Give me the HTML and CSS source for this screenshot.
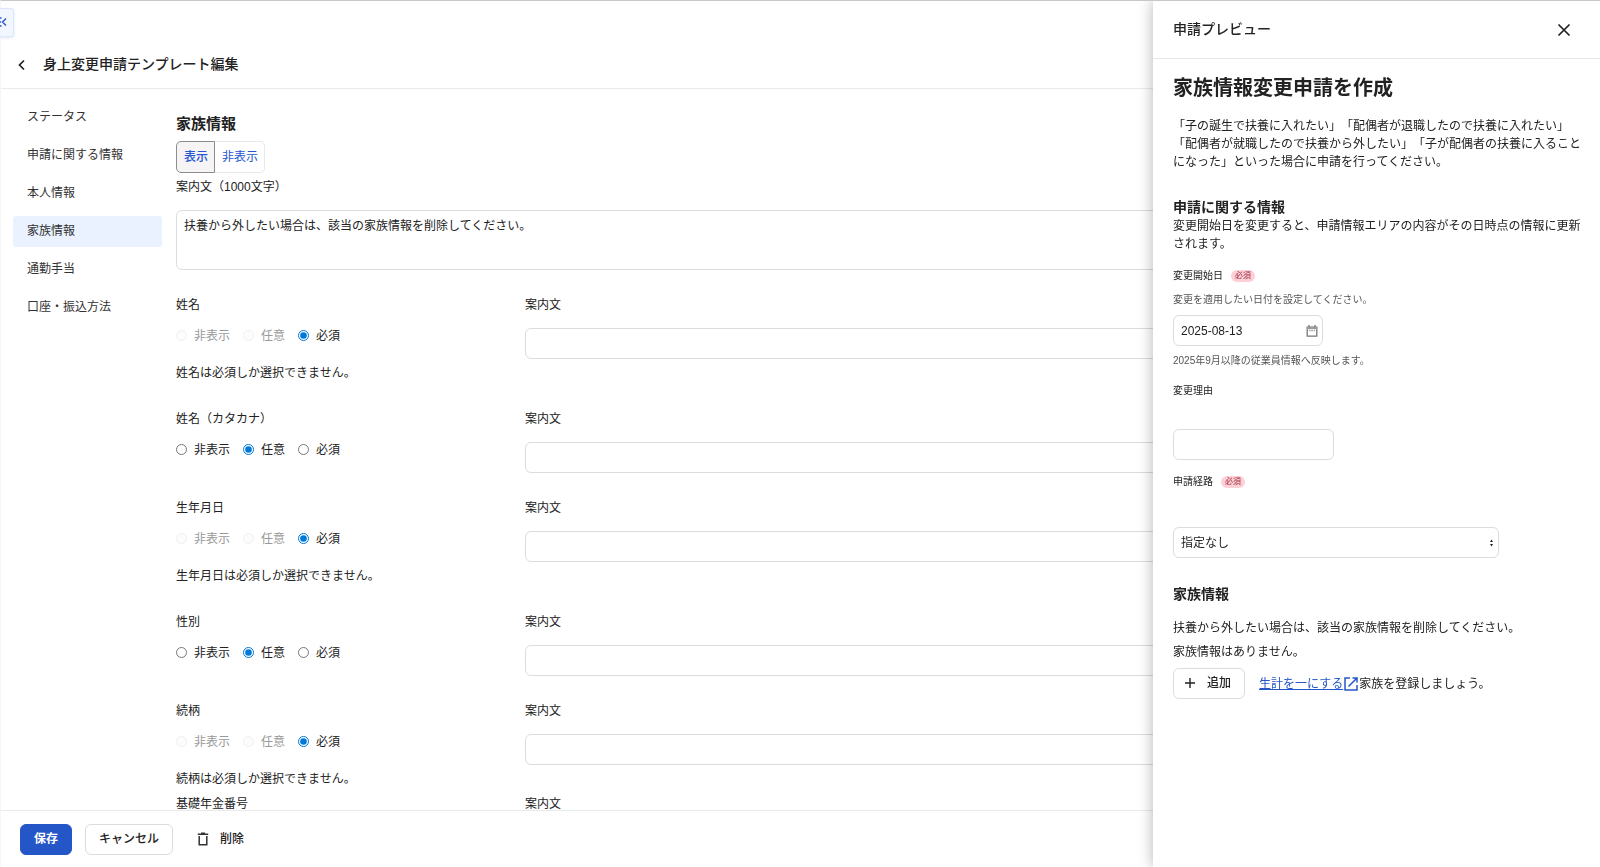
FILE: index.html
```
<!DOCTYPE html>
<html lang="ja">
<head>
<meta charset="utf-8">
<title>身上変更申請テンプレート編集</title>
<link rel="stylesheet" href="styles.css">
</head>
<body>
<div class="app">
  <header class="page-header">
    <button class="icon-button" type="button" aria-label="戻る">
      <svg width="12" height="12" viewBox="0 0 12 12"><path d="M8 1.500 3.500 6 8 10.500" fill="none" stroke="#222" stroke-width="1.700"/></svg>
    </button>
    <h1 class="page-title">身上変更申請テンプレート編集</h1>
  </header>

  <div class="page-body">
    <nav class="side-nav">
      <a class="side-link" href="#status">ステータス</a>
      <a class="side-link" href="#request">申請に関する情報</a>
      <a class="side-link" href="#person">本人情報</a>
      <a class="side-link is-active" href="#family">家族情報</a>
      <a class="side-link" href="#commute">通勤手当</a>
      <a class="side-link" href="#account">口座・振込方法</a>
    </nav>

    <main class="form">
      <h2 class="form-title">家族情報</h2>
      <div class="toggle">
        <button class="toggle-item is-on" type="button">表示</button>
        <button class="toggle-item" type="button">非表示</button>
      </div>
      <label class="guide-label" for="guide">案内文（1000文字）</label>
      <textarea class="field guide" id="guide">扶養から外したい場合は、該当の家族情報を削除してください。</textarea>

      <div class="row">
        <fieldset class="choice">
          <legend>姓名</legend>
          <div class="radios">
            <label class="radio"><input type="radio" name="name" disabled>非表示</label>
            <label class="radio"><input type="radio" name="name" disabled>任意</label>
            <label class="radio"><input type="radio" name="name" checked>必須</label>
          </div>
          <p class="note">姓名は必須しか選択できません。</p>
        </fieldset>
        <div class="guide-cell"><label for="g1">案内文</label><input class="field" id="g1" type="text"></div>
      </div>

      <div class="row">
        <fieldset class="choice">
          <legend>姓名（カタカナ）</legend>
          <div class="radios">
            <label class="radio"><input type="radio" name="kana">非表示</label>
            <label class="radio"><input type="radio" name="kana" checked>任意</label>
            <label class="radio"><input type="radio" name="kana">必須</label>
          </div>
        </fieldset>
        <div class="guide-cell"><label for="g2">案内文</label><input class="field" id="g2" type="text"></div>
      </div>

      <div class="row">
        <fieldset class="choice">
          <legend>生年月日</legend>
          <div class="radios">
            <label class="radio"><input type="radio" name="birth" disabled>非表示</label>
            <label class="radio"><input type="radio" name="birth" disabled>任意</label>
            <label class="radio"><input type="radio" name="birth" checked>必須</label>
          </div>
          <p class="note">生年月日は必須しか選択できません。</p>
        </fieldset>
        <div class="guide-cell"><label for="g3">案内文</label><input class="field" id="g3" type="text"></div>
      </div>

      <div class="row">
        <fieldset class="choice">
          <legend>性別</legend>
          <div class="radios">
            <label class="radio"><input type="radio" name="sex">非表示</label>
            <label class="radio"><input type="radio" name="sex" checked>任意</label>
            <label class="radio"><input type="radio" name="sex">必須</label>
          </div>
        </fieldset>
        <div class="guide-cell"><label for="g4">案内文</label><input class="field" id="g4" type="text"></div>
      </div>

      <div class="row row-tight">
        <fieldset class="choice">
          <legend>続柄</legend>
          <div class="radios">
            <label class="radio"><input type="radio" name="relation" disabled>非表示</label>
            <label class="radio"><input type="radio" name="relation" disabled>任意</label>
            <label class="radio"><input type="radio" name="relation" checked>必須</label>
          </div>
          <p class="note">続柄は必須しか選択できません。</p>
        </fieldset>
        <div class="guide-cell"><label for="g5">案内文</label><input class="field" id="g5" type="text"></div>
      </div>

      <div class="row">
        <fieldset class="choice"><legend>基礎年金番号</legend></fieldset>
        <div class="guide-cell"><label for="g6">案内文</label><input class="field" id="g6" type="text"></div>
      </div>
    </main>
  </div>

  <footer class="page-footer">
    <button class="button button-primary" type="button">保存</button>
    <button class="button" type="button">キャンセル</button>
    <button class="button button-plain" type="button">
      <svg width="12" height="14" viewBox="0 0 12 14"><path d="M2.200 4V12.700H9.800V4M.8 2.300H11.200M4 1.200H8" fill="none" stroke="#333" stroke-width="1.500"/></svg>
      削除
    </button>
  </footer>
</div>

<button class="drawer-tab" type="button" aria-label="メニューを開く">
  <svg width="7" height="12" viewBox="0 0 7 12"><path d="M0 2H1.500M0 6H1M0 10H1.500M6 2.500 2.500 6 6 9.500" fill="none" stroke="#2456d0" stroke-width="1.400"/></svg>
</button>

<aside class="preview">
  <header class="preview-header">
    <h2 class="preview-title">申請プレビュー</h2>
    <button class="icon-button" type="button" aria-label="閉じる">
      <svg width="14" height="14" viewBox="0 0 14 14"><path d="M1.500 1.500 12.500 12.500M12.500 1.500 1.500 12.500" fill="none" stroke="#222" stroke-width="1.700"/></svg>
    </button>
  </header>
  <div class="preview-body">
    <h3 class="preview-heading">家族情報変更申請を作成</h3>
    <p class="lead">「子の誕生で扶養に入れたい」「配偶者が退職したので扶養に入れたい」「配偶者が就職したので扶養から外したい」「子が配偶者の扶養に入ることになった」といった場合に申請を行ってください。</p>

    <h4 class="section-title">申請に関する情報</h4>
    <p class="section-text">変更開始日を変更すると、申請情報エリアの内容がその日時点の情報に更新されます。</p>

    <div class="small-label"><label for="start">変更開始日</label><span class="badge">必須</span></div>
    <p class="hint">変更を適用したい日付を設定してください。</p>
    <div class="date-box">
      <input class="field" id="start" type="text" value="2025-08-13">
      <svg class="date-icon" width="12" height="12" viewBox="0 0 12 12"><path d="M1.200 2.200H10.800V11.200H1.200ZM3 0V2M9 0V2" fill="none" stroke="#777" stroke-width="1.300"/><path d="M1 2H11V4.200H1Z" fill="#999"/><path d="M3 5.700H9" stroke="#888" stroke-width="1" stroke-dasharray="1.500 .8"/></svg>
    </div>
    <p class="hint hint-after">2025年9月以降の従業員情報へ反映します。</p>

    <div class="small-label"><label for="reason">変更理由</label></div>
    <input class="field reason" id="reason" type="text">

    <div class="small-label"><label for="route">申請経路</label><span class="badge">必須</span></div>
    <div class="select-box">
      <select class="field" id="route"><option>指定なし</option></select>
      <svg class="select-icon" width="5" height="8" viewBox="0 0 5 8"><path d="M1 3 2.500 .5 4 3ZM1 5 2.500 7.500 4 5Z" fill="#222"/></svg>
    </div>

    <h4 class="section-title">家族情報</h4>
    <p class="family-text">扶養から外したい場合は、該当の家族情報を削除してください。</p>
    <p class="family-empty">家族情報はありません。</p>
    <div class="add-row">
      <button class="button button-add" type="button">
        <svg width="12" height="12" viewBox="0 0 12 12"><path d="M6 1V11M1 6H11" stroke="#222" stroke-width="1.400"/></svg>
        追加
      </button>
      <p class="add-text"><a class="link" href="#help">生計を一にする</a><svg width="14" height="14" viewBox="0 0 14 14"><path d="M6 1H1V13H13V8M8.500 1H13V5.500M13 1 4.500 9.500" fill="none" stroke="#2456c8" stroke-width="1.500"/></svg>家族を登録しましょう。</p>
    </div>
  </div>
</aside>
</body>
</html>
```
FILE: styles.css
```
* {
  box-sizing: border-box;
}

body {
  margin: 0;
  overflow: hidden;
  background: #fff;
  color: #222;
  font: 12px/18px "Liberation Sans", "Noto Sans CJK JP", sans-serif;
  text-spacing-trim: space-all;
}

h1, h2, h3, h4, p {
  margin: 0;
}

button, input, select, textarea {
  font: inherit;
  color: inherit;
}

.app {
  display: flex;
  flex-direction: column;
  height: 100vh;
  border-top: 1px solid #c8c8c8;
  border-left: 1px solid #f6f6f6;
}

.icon-button {
  display: flex;
  padding: 1px 0 0;
  border: 0;
  background: none;
}

.page-header {
  display: flex;
  flex: none;
  align-items: center;
  gap: 15px;
  padding: 52px 15px 13px;
  border-bottom: 1px solid #e6ecec;
}

.page-title,
.preview-title {
  font-size: 14px;
  line-height: 22px;
  font-weight: 500;
}

.page-body {
  display: flex;
  flex: 1;
  gap: 14px;
  min-height: 0;
  overflow: hidden;
}

.side-nav {
  display: flex;
  flex: none;
  flex-direction: column;
  gap: 7px;
  width: 149px;
  margin: 13px 0 0 12px;
}

.side-link {
  padding: 6px 14px 7px;
  border-radius: 3px;
  color: #333;
  text-decoration: none;
}

.side-link.is-active {
  background: #eaf2ff;
}

.form {
  flex: 1;
  min-width: 0;
  padding: 23px 20px 0 0;
}

.form-title {
  font-size: 15px;
  line-height: 24px;
  font-weight: 700;
}

.toggle {
  display: flex;
  margin: 5px 0;
}

.toggle-item {
  padding: 6px 6px 6px 7px;
  border: 1px solid #e8e8e8;
  border-left: 0;
  border-radius: 0 5px 5px 0;
  background: #fff;
  color: #2456d0;
  line-height: 18px;
}

.toggle-item.is-on {
  border: 1px solid #8c8c8c;
  border-radius: 5px 0 0 5px;
  background: #f6f4f5;
  font-weight: 500;
}

.guide-label {
  display: block;
  margin-bottom: 14px;
}

.field {
  display: block;
  width: 100%;
  height: 31px;
  padding: 5px 7px;
  border: 1px solid #dcdcdc;
  border-radius: 6px;
  background: #fff;
}

.guide {
  height: 60px;
  margin-bottom: 26px;
  padding-top: 6px;
  resize: none;
}

.row {
  display: flex;
  margin-bottom: 26px;
}

.row-tight {
  margin-bottom: 5px;
}

.choice {
  flex: none;
  width: 349px;
  min-width: 0;
  margin: 0;
  padding: 0;
  border: 0;
}

.choice legend {
  padding: 0;
}

.radios {
  display: flex;
  gap: 13px;
  margin-top: 13px;
}

.radio {
  display: flex;
  align-items: center;
  gap: 7px;
}

.radio input {
  width: 11px;
  height: 11px;
  margin: 0 0 2px;
  accent-color: #0078d7;
}

.radio:has(:disabled) {
  color: #999;
}

.radio input:disabled {
  opacity: 0.3;
}

.note {
  margin: 19px 0 2px;
}

.guide-cell {
  display: flex;
  flex: 1;
  flex-direction: column;
  gap: 14px;
}

.page-footer {
  display: flex;
  flex: none;
  gap: 13px;
  padding: 13px 19px 12px;
  border-top: 1px solid #e6ecec;
}

.button {
  display: flex;
  align-items: center;
  height: 31px;
  padding: 0 13px 2px;
  border: 1px solid #dcdcdc;
  border-radius: 6px;
  background: #fff;
  font-weight: 500;
}

.button-primary {
  border-color: #2456c8;
  background: #2456c8;
  color: #fff;
  font-weight: 700;
}

.button-plain {
  gap: 11px;
  padding: 0 10px 2px;
  border-color: transparent;
}

.drawer-tab {
  position: absolute;
  top: 8px;
  left: 0;
  width: 14px;
  height: 29px;
  padding: 3px 0 0;
  border: 1px solid #dbe7fd;
  border-left: 0;
  border-radius: 0 4px 4px 0;
  background: #f2f7ff;
  box-shadow: 0 1px 3px rgba(36, 86, 200, 0.15);
  text-align: left;
}

.preview {
  position: fixed;
  top: 1px;
  right: 0;
  bottom: 0;
  width: 447px;
  overflow: auto;
  background: #fff;
  box-shadow: 0 0 14px rgba(0, 0, 0, 0.3);
  clip-path: inset(0 0 0 -20px);
}

.preview-header {
  display: flex;
  align-items: center;
  justify-content: space-between;
  padding: 17px 29px 18px 20px;
  border-bottom: 1px solid #e6e6e6;
}

.preview-body {
  padding: 14px 16px 14px 20px;
}

.preview-heading {
  margin-bottom: 14px;
  font-size: 20px;
  line-height: 30px;
  font-weight: 700;
}

.lead {
  margin-bottom: 26px;
}

.section-title {
  font-size: 14px;
  line-height: 20px;
  font-weight: 700;
}

.section-text {
  margin-bottom: 14px;
}

.small-label {
  display: flex;
  align-items: center;
  gap: 8px;
  font-size: 10px;
}

.badge {
  padding: 0 4px;
  border-radius: 6px;
  background: #fcd0d6;
  color: #9c2a3e;
  font-size: 8px;
  line-height: 12px;
}

.hint {
  margin: 6px 0;
  color: #555;
  font-size: 10px;
}

.hint-after {
  margin: 6px 0 12px;
}

.date-box {
  position: relative;
  width: 150px;
}

.date-icon {
  position: absolute;
  right: 5px;
  bottom: 9px;
}

.reason {
  width: 161px;
  margin: 29px 0 13px;
}

.select-box {
  position: relative;
  width: 326px;
  margin: 36px 0 26px;
}

.select-box select {
  appearance: none;
}

.select-icon {
  position: absolute;
  right: 5px;
  bottom: 11px;
}

.family-text {
  margin: 15px 0 6px;
}

.family-empty {
  margin-bottom: 7px;
}

.add-row {
  display: flex;
  align-items: center;
  gap: 14px;
}

.button-add {
  gap: 11px;
  padding: 0 13px 2px 10px;
}

.add-text {
  display: flex;
  align-items: center;
  gap: 1px;
}

.link {
  color: #2456c8;
}
```
